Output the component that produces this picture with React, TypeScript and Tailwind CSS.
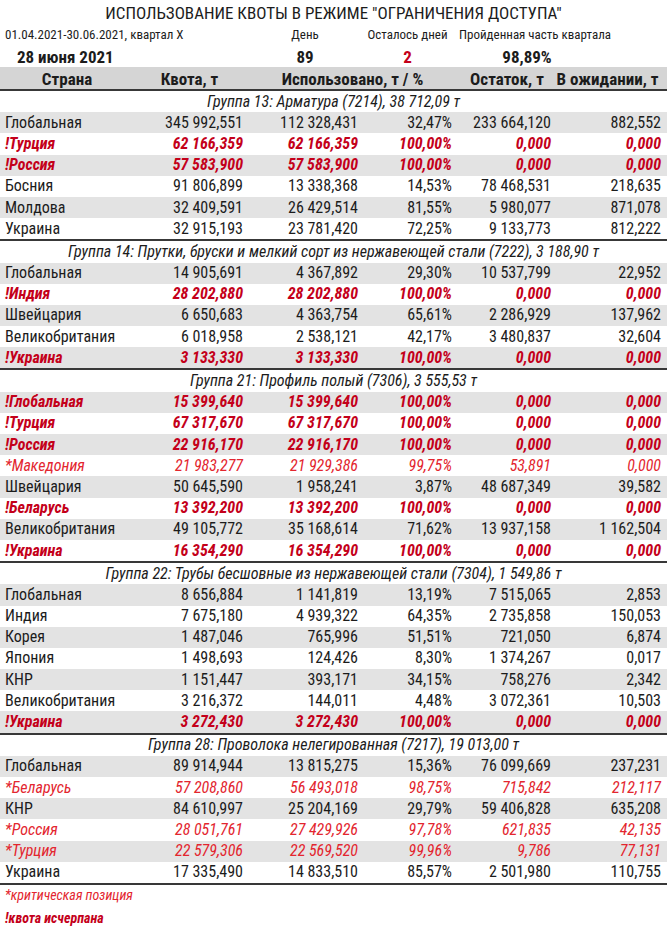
type Kind = "n" | "c" | "x";
type Row = [string, string, string, string, string, string, Kind?];

// Группы квот: имя, квота, использовано, %, остаток, в ожидании, тип строки
const GROUPS: { title: string; rows: Row[] }[] = [
  {
    title: "Группа 13: Арматура (7214), 38 712,09 т",
    rows: [
      ["Глобальная", "345 992,551", "112 328,431", "32,47%", "233 664,120", "882,552"],
      ["!Турция", "62 166,359", "62 166,359", "100,00%", "0,000", "0,000", "x"],
      ["!Россия", "57 583,900", "57 583,900", "100,00%", "0,000", "0,000", "x"],
      ["Босния", "91 806,899", "13 338,368", "14,53%", "78 468,531", "218,635"],
      ["Молдова", "32 409,591", "26 429,514", "81,55%", "5 980,077", "871,078"],
      ["Украина", "32 915,193", "23 781,420", "72,25%", "9 133,773", "812,222"],
    ],
  },
  {
    title: "Группа 14: Прутки, бруски и мелкий сорт из нержавеющей стали (7222), 3 188,90 т",
    rows: [
      ["Глобальная", "14 905,691", "4 367,892", "29,30%", "10 537,799", "22,952"],
      ["!Индия", "28 202,880", "28 202,880", "100,00%", "0,000", "0,000", "x"],
      ["Швейцария", "6 650,683", "4 363,754", "65,61%", "2 286,929", "137,962"],
      ["Великобритания", "6 018,958", "2 538,121", "42,17%", "3 480,837", "32,604"],
      ["!Украина", "3 133,330", "3 133,330", "100,00%", "0,000", "0,000", "x"],
    ],
  },
  {
    title: "Группа 21: Профиль полый (7306), 3 555,53 т",
    rows: [
      ["!Глобальная", "15 399,640", "15 399,640", "100,00%", "0,000", "0,000", "x"],
      ["!Турция", "67 317,670", "67 317,670", "100,00%", "0,000", "0,000", "x"],
      ["!Россия", "22 916,170", "22 916,170", "100,00%", "0,000", "0,000", "x"],
      ["*Македония", "21 983,277", "21 929,386", "99,75%", "53,891", "0,000", "c"],
      ["Швейцария", "50 645,590", "1 958,241", "3,87%", "48 687,349", "39,582"],
      ["!Беларусь", "13 392,200", "13 392,200", "100,00%", "0,000", "0,000", "x"],
      ["Великобритания", "49 105,772", "35 168,614", "71,62%", "13 937,158", "1 162,504"],
      ["!Украина", "16 354,290", "16 354,290", "100,00%", "0,000", "0,000", "x"],
    ],
  },
  {
    title: "Группа 22: Трубы бесшовные из нержавеющей стали (7304), 1 549,86 т",
    rows: [
      ["Глобальная", "8 656,884", "1 141,819", "13,19%", "7 515,065", "2,853"],
      ["Индия", "7 675,180", "4 939,322", "64,35%", "2 735,858", "150,053"],
      ["Корея", "1 487,046", "765,996", "51,51%", "721,050", "6,874"],
      ["Япония", "1 498,693", "124,426", "8,30%", "1 374,267", "0,017"],
      ["КНР", "1 151,447", "393,171", "34,15%", "758,276", "2,342"],
      ["Великобритания", "3 216,372", "144,011", "4,48%", "3 072,361", "10,503"],
      ["!Украина", "3 272,430", "3 272,430", "100,00%", "0,000", "0,000", "x"],
    ],
  },
  {
    title: "Группа 28: Проволока нелегированная (7217), 19 013,00 т",
    rows: [
      ["Глобальная", "89 914,944", "13 815,275", "15,36%", "76 099,669", "237,231"],
      ["*Беларусь", "57 208,860", "56 493,018", "98,75%", "715,842", "212,117", "c"],
      ["КНР", "84 610,997", "25 204,169", "29,79%", "59 406,828", "635,208"],
      ["*Россия", "28 051,761", "27 429,926", "97,78%", "621,835", "42,135", "c"],
      ["*Турция", "22 579,306", "22 569,520", "99,96%", "9,786", "77,131", "c"],
      ["Украина", "17 335,490", "14 833,510", "85,57%", "2 501,980", "110,755"],
    ],
  },
];

const KIND_CLS: Record<Kind, string> = {
  n: "text-[#1c1c1c]",
  c: "text-[#e3262f] italic",
  x: "text-[#c4001a] italic font-bold",
};

function DataRow({ row, idx }: { row: Row; idx: number }) {
  const [name, quota, used, pct, rest, pending, kind = "n"] = row;
  return (
    <div
      className={`grid h-[21.2px] grid-cols-[150px_93px_115px_94px_99px_110px] items-center text-[16px] leading-none ${KIND_CLS[kind]} ${
        idx % 2 === 0 ? "bg-[#e3e3e3]" : "bg-white"
      }`}
    >
      <span className="pl-[5px]">{name}</span>
      <span className="text-right">{quota}</span>
      <span className="text-right">{used}</span>
      <span className="text-right">{pct}</span>
      <span className="text-right">{rest}</span>
      <span className="text-right">{pending}</span>
    </div>
  );
}

export default function App() {
  return (
    <div className="w-[667px] bg-white font-['Roboto_Condensed','Liberation_Sans',sans-serif] text-[#1c1c1c]">
      <h1 className="pt-[3px] text-center text-[17px] leading-[20px] font-normal">
        ИСПОЛЬЗОВАНИЕ КВОТЫ В РЕЖИМЕ "ОГРАНИЧЕНИЯ ДОСТУПА"
      </h1>
      <div className="mt-[2px] grid h-[20px] grid-cols-[250px_110px_95px_160px] items-center text-[13px]">
        <span className="pl-[5px]">01.04.2021-30.06.2021, квартал X</span>
        <span className="text-center">День</span>
        <span className="text-center">Осталось дней</span>
        <span className="text-center">Пройденная часть квартала</span>
      </div>
      <div className="grid h-[22px] grid-cols-[250px_110px_95px_160px] items-center text-[17px] font-bold">
        <span className="pl-[17px]">28 июня 2021</span>
        <span className="text-center">89</span>
        <span className="text-center text-[#c4001a]">2</span>
        <span className="pr-[16px] text-center">98,89%</span>
      </div>

      <div className="grid h-[22px] grid-cols-[134px_111px_215px_94px_107px] items-center bg-[#d5d5d5] text-[17px] font-bold">
        <span className="text-center">Страна</span>
        <span className="text-center">Квота, т</span>
        <span className="text-center">Использовано, т / %</span>
        <span className="text-center">Остаток, т</span>
        <span className="text-center">В ожидании, т</span>
      </div>
      <div className="h-[2px] bg-[#383838]" />

      {GROUPS.map((g) => (
        <div key={g.title}>
          <div className="flex h-[21.2px] items-center justify-center text-[16px] italic">{g.title}</div>
          {g.rows.map((r, i) => (
            <DataRow key={r[0]} row={r} idx={i} />
          ))}
          <div className="h-[2px] bg-[#383838]" />
        </div>
      ))}

      <div className="flex flex-col gap-[3px] pl-[5px] text-[14px] leading-[20px] italic">
        <span className="text-[#e3262f]">*критическая позиция</span>
        <span className="font-bold text-[#c4001a]">!квота исчерпана</span>
      </div>
    </div>
  );
}
